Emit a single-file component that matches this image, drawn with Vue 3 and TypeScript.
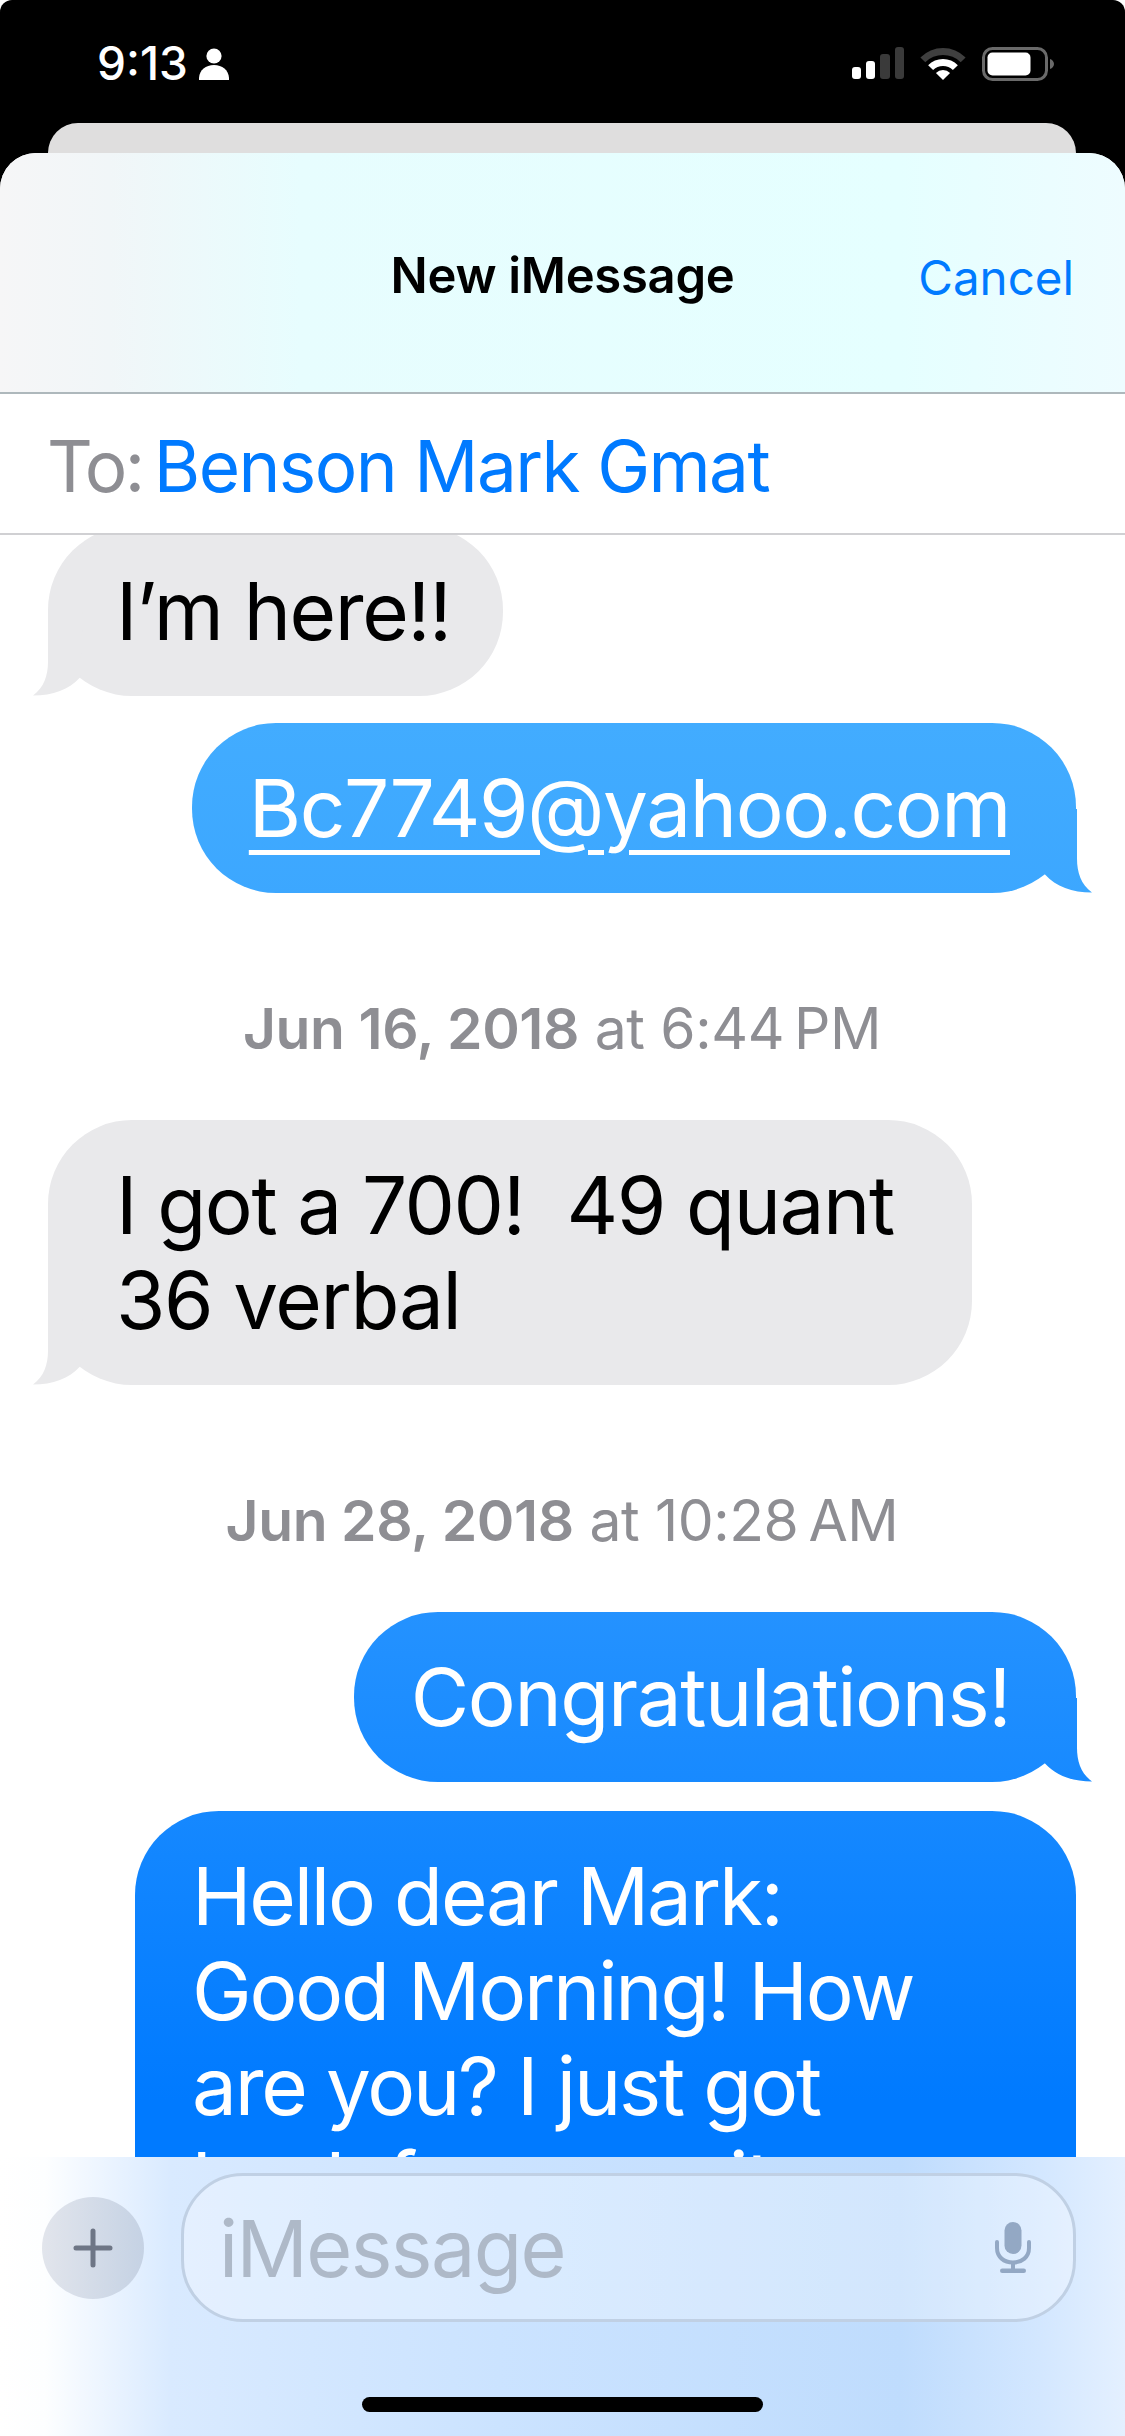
<script setup lang="ts">
interface Message {
  id: number
  from: 'me' | 'them'
  text: string
  link?: boolean
  stamp?: { date: string; time: string }
  tail?: boolean
  width?: number
}

const messages: Message[] = [
  { id: 1, from: 'them', text: 'I’m here!!', tail: true },
  { id: 2, from: 'me', text: 'Bc7749@yahoo.com', link: true, tail: true },
  {
    id: 3,
    from: 'them',
    text: 'I got a 700!  49 quant\n36 verbal',
    stamp: { date: 'Jun 16, 2018', time: '6:44\u2009PM' },
    tail: true,
    width: 924,
  },
  {
    id: 4,
    from: 'me',
    text: 'Congratulations!',
    stamp: { date: 'Jun 28, 2018', time: '10:28\u2009AM' },
    tail: true,
  },
  {
    id: 5,
    from: 'me',
    text: 'Hello dear Mark:\nGood Morning! How\nare you? I just got\nback from a unit',
    width: 941,
  },
]
</script>

<template>
  <div class="screen">
    <header class="status">
      <div class="clock">
        <span>9:13</span>
        <svg class="person" width="30" height="32" viewBox="0 0 30 32">
          <circle cx="15" cy="8" r="7.6" fill="#fff" />
          <path d="M0 32c-.6-9 6-15 15-15s15.600 6 15 15z" fill="#fff" />
        </svg>
      </div>
      <div class="indicators">
        <svg width="52" height="33" viewBox="0 0 52 33">
          <rect x="0" y="20" width="9" height="12" rx="3" fill="#fff" />
          <rect x="14" y="14" width="9" height="18" rx="3" fill="#fff" />
          <rect x="28" y="7" width="10" height="25" rx="3" fill="#3a3a3a" />
          <rect x="43" y="0" width="9" height="32" rx="3" fill="#3a3a3a" />
        </svg>
        <svg width="46" height="34" viewBox="0 0 46 34">
          <path d="M.4 10.400A32 32 0 0 1 45.600 10.400L40.700 15.300A25 25 0 0 0 5.300 15.300Z" fill="#3f3f3f" />
          <path d="M8.150 18.150A21 21 0 0 1 37.850 18.150L32.900 23.100A14 14 0 0 0 13.100 23.100Z" fill="#fff" />
          <path d="M15.930 25.930A10 10 0 0 1 30.070 25.930L23 33Z" fill="#fff" />
        </svg>
        <svg width="72" height="34" viewBox="0 0 72 34">
          <rect x="1.500" y="1.500" width="63" height="31" rx="9" fill="none" stroke="#6a6a6a" stroke-width="3" />
          <rect x="5.500" y="5.500" width="43" height="23" rx="5" fill="#fff" />
          <path d="M68 12c2.500.8 4 2.800 4 5s-1.500 4.200-4 5z" fill="#6a6a6a" />
        </svg>
      </div>
    </header>

    <div class="back-card"></div>

    <main class="sheet">
      <div class="title-bar">
        <h1>New iMessage</h1>
        <span class="cancel">Cancel</span>
      </div>

      <div class="to-row">
        <span class="to-label">To:</span>
        <span class="to-name">Benson Mark Gmat</span>
      </div>

      <section class="thread">
        <template v-for="m in messages" :key="m.id">
          <p v-if="m.stamp" class="stamp">
            <b>{{ m.stamp.date }}</b> at {{ m.stamp.time }}
          </p>
          <div
            class="bubble"
            :class="m.from"
            :style="m.width ? { width: m.width + 'px' } : undefined"
          >
            <a v-if="m.link" class="mail">{{ m.text }}</a>
            <template v-else>{{ m.text }}</template>
            <i v-if="m.tail" class="tail"></i>
          </div>
        </template>
      </section>

      <footer class="composer">
        <div class="input-row">
          <button class="plus" type="button" aria-label="Add">
            <svg width="40" height="40" viewBox="0 0 40 40">
              <path d="M20 3V37M3 20H37" stroke="#6e7686" stroke-width="5" stroke-linecap="round" />
            </svg>
          </button>
          <div class="field">
            <span class="placeholder">iMessage</span>
            <svg class="mic" width="36" height="51" viewBox="0 0 36 51" fill="#93a8c4">
              <rect x="9.500" y="0" width="17" height="32" rx="8.500" />
              <path
                d="M2 20V26C2 35 9 40.500 18 40.500S34 35 34 26V20"
                fill="none"
                stroke="#93a8c4"
                stroke-width="4"
                stroke-linecap="round"
              />
              <rect x="16" y="40" width="4" height="8" />
              <rect x="5" y="46.500" width="26" height="4.500" rx="2.250" />
            </svg>
          </div>
        </div>
        <div class="home-bar"></div>
      </footer>
    </main>
  </div>
</template>

<style>
html,
body {
  margin: 0;
  background: #fff;
}
</style>

<style scoped>
.screen {
  width: 1125px;
  height: 2436px;
  display: flex;
  flex-direction: column;
  overflow: hidden;
  background: #000;
  border-radius: 12px 12px 0 0;
  font-family: Inter, "Liberation Sans", sans-serif;
}

.status {
  height: 123px;
  flex: none;
  box-sizing: border-box;
  padding: 47px 71px 0 97px;
  display: flex;
  justify-content: space-between;
  align-items: flex-start;
}

.clock {
  display: flex;
  align-items: center;
  gap: 11px;
  color: #fff;
  font-size: 46px;
  font-weight: 500;
  line-height: 33px;
}

.indicators {
  display: flex;
  align-items: flex-start;
  gap: 16px;
}

.back-card {
  height: 30px;
  flex: none;
  margin: 0 49px 0 48px;
  background: #dfdede;
  border-radius: 36px 36px 0 0;
}

.sheet {
  flex: 1;
  min-height: 0;
  display: flex;
  flex-direction: column;
  overflow: hidden;
  background: #fff;
  border-radius: 36px 36px 0 0;
}

.title-bar {
  height: 241px;
  flex: none;
  box-sizing: border-box;
  position: relative;
  display: flex;
  align-items: center;
  justify-content: center;
  padding: 5px 0 0;
  border-bottom: 2px solid #aeb8bc;
  background: linear-gradient(90deg, #f6f6f7 0, #f1f6f8 110px, #e7fdfe 300px, #e5ffff 900px, #eefcff 1125px);
}

.title-bar h1 {
  margin: 0;
  font-size: 49px;
  font-weight: 600;
  color: #000;
  letter-spacing: -0.3px;
}

.cancel {
  position: absolute;
  right: 51px;
  top: 95px;
  font-size: 47.500px;
  line-height: 60px;
  color: #007aff;
}

.to-row {
  height: 141px;
  flex: none;
  box-sizing: border-box;
  display: flex;
  align-items: center;
  gap: 11px;
  padding: 4px 47px 0;
  border-bottom: 2px solid #d0d0d3;
  font-size: 71px;
  letter-spacing: -1.6px;
}

.to-label {
  color: #8e8e93;
  letter-spacing: -2.5px;
}

.to-name {
  color: #007aff;
}

.thread {
  flex: 1;
  min-height: 0;
  overflow: hidden;
  display: flex;
  flex-direction: column;
  gap: 27px;
  padding: 0 49px 0 48px;
}

.bubble {
  flex: none;
  position: relative;
  box-sizing: border-box;
  width: fit-content;
  padding: 37px 52px 38px 68px;
  border-radius: 84px;
  font-size: 80px;
  line-height: 95px;
  letter-spacing: -1.400px;
  white-space: pre-wrap;
}

.bubble:first-child {
  margin-top: -9.500px;
}

.them {
  align-self: flex-start;
  background: #e9e9eb;
  color: #000;
}

.me {
  align-self: flex-end;
  padding: 37px 66px 38px 57px;
  color: #fff;
}

/* Consecutive outgoing bubbles sit a touch further apart and run tighter */
.me + .me {
  margin-top: 2px;
  letter-spacing: -2.200px;
}

.me,
.me .tail {
  background: linear-gradient(180deg, #42acff 0, #42acff 722px, #2492ff 1613px, #007aff 2100px) fixed;
}

.mail {
  color: #fff;
  text-decoration: underline;
  text-decoration-thickness: 5px;
  text-underline-offset: 13px;
}

/* Curled corner: starts where the bubble's rounding begins and ends in a point */
.tail {
  position: absolute;
  bottom: 0;
  left: -15px;
  width: 50px;
  height: 84px;
  background: #e9e9eb;
  clip-path: path("M15 0V50C15 64 11 76 0 84C20 84 36 78 47 66L50 0Z");
}

.me .tail {
  left: auto;
  right: -16px;
  clip-path: path("M35 0V50C35 64 39 76 50 84C30 84 14 78 3 66L0 0Z");
}

.stamp {
  flex: none;
  margin: 76px 0 31px;
  text-align: center;
  font-size: 57px;
  line-height: 66px;
  letter-spacing: -0.4px;
  color: #8e8e93;
}

.stamp b {
  font-weight: 600;
}

.composer {
  height: 279px;
  flex: none;
  box-sizing: border-box;
  padding: 16px 49px 0 42px;
  display: flex;
  flex-direction: column;
  background: linear-gradient(90deg, #fff 0, #fdfeff 45px, #d9eaff 170px, #cbe3ff 500px, #bfdcfd 900px, #d3e7ff 1040px, #e4f0ff 1125px);
}

.input-row {
  display: flex;
  align-items: center;
  gap: 37px;
}

.plus {
  width: 102px;
  height: 102px;
  flex: none;
  padding: 0;
  border: 0;
  border-radius: 50%;
  display: grid;
  place-items: center;
  background: linear-gradient(90deg, #e2e5ec, #c5d2e4);
}

.field {
  flex: 1;
  height: 149px;
  box-sizing: border-box;
  display: flex;
  align-items: center;
  justify-content: space-between;
  padding: 0 42px 0 35px;
  border: 3px solid #c0d0e4;
  border-radius: 62px;
  background: rgba(255, 255, 255, 0.3);
}

.placeholder {
  font-size: 79px;
  letter-spacing: -1.600px;
  color: #aeb9c8;
}

.home-bar {
  width: 401px;
  height: 15px;
  margin: 75px 0 0 320px;
  border-radius: 8px;
  background: #000;
}
</style>
